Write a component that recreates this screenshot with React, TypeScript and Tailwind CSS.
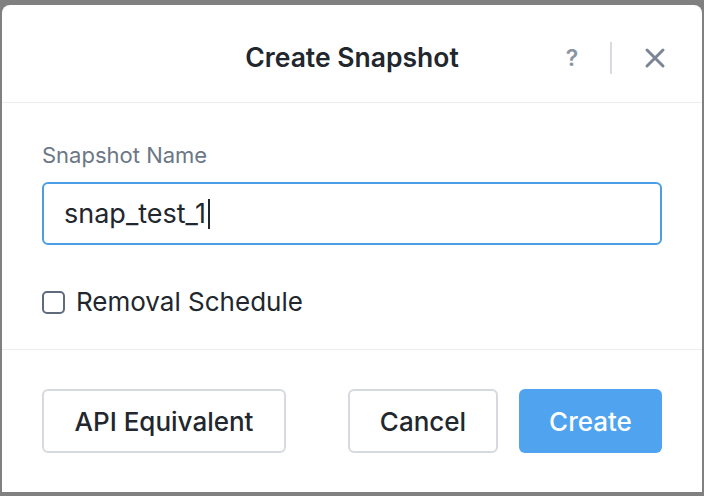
import React, { useState } from 'react';

function App() {
  const [name, setName] = useState('snap_test_1');

  return (
    <div className="w-[704px] h-[496px] bg-[#808080] pt-[5px] pl-[2px] pr-[2px] pb-[4px] font-['Inter',sans-serif]">
      <div className="h-full bg-white rounded-t-[8px] flex flex-col">
        <div className="h-[98px] pt-[6px] flex items-center border-b border-[#ececee] relative">
          <h1 className="flex-1 text-center text-[26.5px] leading-[32px] font-semibold text-[#22272e]">Create Snapshot</h1>
          <div className="absolute right-[35px] top-[36px] flex items-center">
            <span className="text-[23px] font-semibold text-[#8a95a3] w-[20px] text-center">?</span>
            <span className="ml-[28px] mr-[31px] w-[2px] h-[32px] bg-[#d8dce1]"></span>
            <svg width="24" height="24" viewBox="0 0 24 24" className="text-[#7a8595]">
              <path d="M4 4 L20 20 M20 4 L4 20" stroke="currentColor" strokeWidth="3" strokeLinecap="round" />
            </svg>
          </div>
        </div>

        <div className="px-[40px] pt-[38px] flex flex-col h-[247px] border-b border-[#ececee]">
          <label className="text-[22px] text-[#6b7785] mb-[13px] leading-[28px]">Snapshot Name</label>
          <div className="h-[63px] border-2 border-[#4b9ee6] rounded-[6px] flex items-center px-[20px]">
            <span className="text-[27px] leading-[32px] text-[#22272e]">{name}</span>
            <span className="w-[1.5px] h-[30px] bg-[#22272e] ml-[2px]"></span>
          </div>
          <label className="mt-[41px] flex items-center gap-[11px] cursor-pointer" onClick={() => setName(name)}>
            <span className="w-[23px] h-[23px] border-2 border-[#5f6b7c] rounded-[5px]"></span>
            <span className="text-[26px] leading-[32px] text-[#22272e]">Removal Schedule</span>
          </label>
        </div>

        <div className="flex-1 flex items-start pt-[39px] px-[40px]">
          <button className="w-[244px] h-[64px] border-2 border-[#d6dade] rounded-[6px] text-[26px] font-medium text-[#22272e]">
            API Equivalent
          </button>
          <div className="ml-auto flex gap-[21px]">
            <button className="w-[150px] h-[64px] border-2 border-[#d6dade] rounded-[6px] text-[26px] font-medium text-[#22272e]">
              Cancel
            </button>
            <button className="w-[143px] h-[64px] bg-[#50a4ef] rounded-[6px] text-[26px] font-medium text-white">
              Create
            </button>
          </div>
        </div>
      </div>
    </div>
  );
}

export default App;
